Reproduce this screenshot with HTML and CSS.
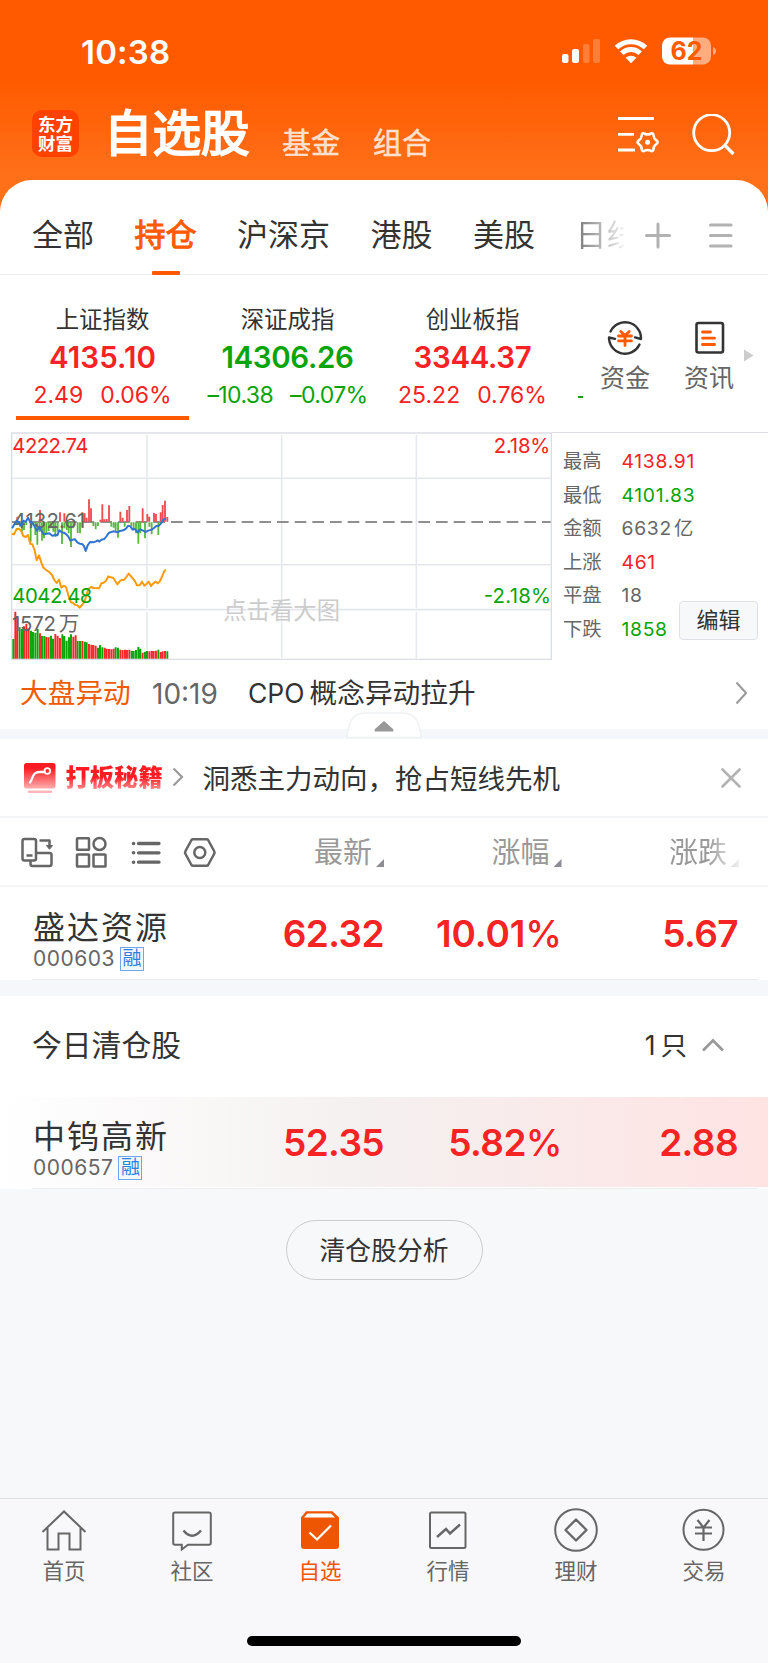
FILE: index.html
```html
<!DOCTYPE html>
<html lang="zh-CN">
<head>
<meta charset="utf-8">
<title>自选股</title>
<link rel="stylesheet" href="styles.css">
</head>
<body>
<div class="app">
  <div class="statusbar">
    <span class="clock">10:38</span>
    <svg class="signals" width="156" height="30" viewBox="0 0 156 30" fill="#fff">
      <rect x="2" y="17" width="6.5" height="9" rx="2"/>
      <rect x="12" y="12" width="7" height="14" rx="2"/>
      <rect x="23" y="7" width="6.5" height="19" rx="2" opacity=".22"/>
      <rect x="33" y="2" width="7" height="24" rx="2" opacity=".22"/>
      <g fill="none" stroke="#fff" stroke-width="5">
        <path d="M56.5 10.5a21 21 0 0 1 29 0"/>
        <path d="M61.8 16.2a13.2 13.2 0 0 1 18.4 0"/>
      </g>
      <path d="M65.6 20.8a8 8 0 0 1 10.8 0L71 26.2z"/>
      <path d="M110 0.5h23v27h-23a8 8 0 0 1-8-8v-11a8 8 0 0 1 8-8z"/>
      <path d="M133 .5h10a8 8 0 0 1 8 8v11a8 8 0 0 1-8 8h-10zM153 10q3 1 3 4t-3 4z" opacity=".5"/>
      <text x="126.500" y="22.500" font-size="25" font-weight="700" text-anchor="middle" fill="#ff5a00">62</text>
    </svg>
  </div>
  <header class="header">
    <div class="logo"><span>东方</span><span>财富</span></div>
    <h1 class="title">自选股</h1>
    <span class="sub">基金</span>
    <span class="sub">组合</span>
    <svg class="head-icons" width="120" height="44" viewBox="0 0 120 44" fill="none" stroke="#fff" stroke-width="2.800">
      <path d="M2 4.500h36M2 20.300h16M2 36h17"/>
      <path transform="translate(31.600 28.200) scale(.93)" d="M9.400-1.900Q12.200 0 9.400 1.900Q6.600 3.800 6.350 7.200Q6.100 10.600 3.050 9.100Q0 7.600-3.050 9.100Q-6.100 10.600-6.350 7.200Q-6.600 3.800-9.400 1.900Q-12.200 0-9.400-1.900Q-6.600-3.800-6.350-7.200Q-6.100-10.600-3.050-9.100Q0-7.600 3.050-9.100Q6.100-10.600 6.350-7.200Q6.600-3.800 9.400-1.900z" stroke-linejoin="round"/>
      <circle cx="31.600" cy="28.200" r="2.500" fill="#fff" stroke="none"/>
      <circle cx="95.700" cy="18.700" r="18"/>
      <path d="M108.500 31l9 9" stroke-width="3.400"/>
    </svg>
  </header>

  <main class="sheet">
    <nav class="tabs">
      <span>全部</span><span class="on">持仓</span><span>沪深京</span><span>港股</span><span>美股</span><span class="fade">日线</span>
      <svg class="tab-icons" width="90" height="28" viewBox="0 0 90 28" stroke="#b2b2b2" stroke-width="3" stroke-linecap="round">
        <path d="M2.500 14.500h23M14 3v23M66.500 4h20.500M66.500 14.500h20.500M66.500 25h20.500"/>
      </svg>
    </nav>

    <section class="indices">
      <div class="index up on"><b>上证指数</b><strong>4135.10</strong><p><span>2.49</span><span>0.06%</span></p></div>
      <div class="index down"><b>深证成指</b><strong>14306.26</strong><p><span>–10.38</span><span>–0.07%</span></p></div>
      <div class="index up"><b>创业板指</b><strong>3344.37</strong><p><span>25.22</span><span>0.76%</span></p></div>
      <div class="next"><i></i></div>
      <div class="short">
        <svg width="38" height="38" viewBox="0 0 38 38" fill="none" stroke="#333" stroke-width="2.400" stroke-linecap="round" stroke-linejoin="round">
          <path d="M4.500 12.500a16 16 0 0 1 30.500 7.500l-6-1.600M33.500 25.500A16 16 0 0 1 3 18.500l6 1.300"/>
          <path d="M14.800 12.500l4.200 4 4.200-4M12.500 17h13M12.500 21.800h13M19 17v9.500" stroke="#ff5a00" stroke-width="2.800"/>
        </svg>
        <span>资金</span>
      </div>
      <div class="short">
        <svg width="38" height="38" viewBox="0 0 38 38" fill="none" stroke="#333" stroke-width="2.600" stroke-linecap="round">
          <rect x="6.500" y="4" width="26.500" height="29.500" rx="2"/>
          <path d="M12.500 13h8M12.500 19.200h12M12.500 25.500h12" stroke="#ff5a00" stroke-width="2.800"/>
        </svg>
        <span>资讯</span>
      </div>
      <svg class="more" width="10" height="14" viewBox="0 0 10 14"><path d="M0 .5v12L9.500 6.500z" fill="#ccc"/></svg>
    </section>

    <section class="market">
      <svg class="chart" width="552" height="245" viewBox="0 0 1656 735" fill="none">
        <g stroke="#e4e7ee" stroke-width="4.500">
          <path d="M36 160H1652M36 419H1652M441 30V548M441 560V700M845 30V548M845 560V700M1249 30V548M1249 560V700"/>
          <path d="M36 554H1652" stroke-width="5"/>
        </g>
        <path d="M1656 24H35V703H1654V24" stroke="#dcdee5" stroke-width="4"/>
        <path d="M36 291H1652" stroke="#8f8f8f" stroke-width="5.500" stroke-dasharray="35 18"/>
        <text x="670" y="583" font-size="70" fill="#ccc" textLength="350">点击看大图</text>
        <g stroke-width="5.500">
          <path stroke="#ef4a50" d="M52 290V275M120 290V255M180 290V262M193 290V265M247 290V262M254 290V265M260 290V278M267 290V223M273 290V250M301 290V284M307 290V238M313 290V283M320 290V282M327 290V241M361 290V260M368 290V278M381 290V255M388 290V243M428 290V250M442 290V267M448 290V275M462 290V264M468 290V267M482 290V262M488 290V240M495 290V227M502 290V276"/>
          <path stroke="#5ab83c" d="M52 292V300M60 292V305M66 292V320M72 292V315M79 292V300M92 292V350M99 292V300M106 292V330M112 292V359M119 292V320M126 292V347M132 292V340M139 292V325M146 292V318M153 292V310M160 292V320M166 292V335M173 292V320M186 292V357M193 292V310M200 292V315M206 292V325M213 292V366M220 292V310M233 292V324M240 292V325M247 292V305M280 292V303M287 292V313M294 292V303M334 292V305M341 292V308M347 292V320M354 292V338M374 292V305M394 292V303M401 292V315M408 292V325M415 292V356M421 292V325M435 292V340M448 292V305M455 292V328M475 292V330"/>
        </g>
        <g stroke-width="5.800">
          <path stroke="#f42828" d="M46 560V701M52 576V701M72 604V701M79 596V701M86 610V701M120 625V701M139 636V701M146 637V701M166 627V701M173 632V701M180 639V701M220 635V701M227 631V701M247 648V701M267 657V701M274 659V701M280 660V701M287 662V701M314 668V701M320 671V701M327 672V701M334 673V701M341 671V701M361 674V701M368 675V701M375 674V701M381 675V701M388 674V701M428 683V701M448 679V701M455 678V701M461 678V701M468 677V701M482 681V701M488 679V701M495 678V701"/>
          <path stroke="#08a408" d="M40 642V701M59 607V701M66 612V701M93 617V701M99 621V701M106 623V701M113 612V701M126 633V701M133 633V701M153 632V701M159 641V701M187 628V701M193 633V701M200 647V701M207 637V701M213 628V701M233 648V701M240 648V701M254 650V701M260 652V701M294 668V701M300 660V701M307 667V701M347 667V701M354 668V701M395 677V701M401 678V701M408 675V701M415 666V701M421 671V701M435 680V701M441 678V701M475 674V701M502 679V701"/>
        </g>
        <g font-size="61" fill="#666">
          <text x="38" y="309" textLength="218">4132.61</text>
          <text x="36" y="619" textLength="132">1572</text>
          <text x="176" y="619" font-size="62">万</text>
        </g>
        <path stroke="#ff9a0a" stroke-width="6" stroke-linejoin="round" d="M36 327L42 328 50 312 57 311 64 319 70 333 77 336 84 330 91 357 97 358 104 376 110 406 117 391 124 413 131 429 140 436 148 441 156 450 163 465 170 474 177 464 184 488 191 482 198 486 205 510 212 531 219 534 226 540 232 541 239 548 246 540 253 531 259 512 265 492 273 486 281 489 297 490 304 475 311 473 318 467 325 454 333 457 340 459 347 470 352 478 360 468 366 464 372 465 379 456 386 446 393 454 399 461 405 469 411 481 419 481 426 470 433 482 440 476 446 470 453 483 460 475 467 470 473 475 480 468 487 453 493 438 498 434"/>
        <path stroke="#3074cf" stroke-width="6" stroke-linejoin="round" d="M36 310L42 300 49 289 56 291 63 302 70 287 77 291 84 278 91 292 98 294 105 307 111 317 118 306 125 318 132 328 140 326 148 325 157 332 166 330 172 331 178 316 185 322 192 323 199 328 205 335 211 347 218 344 225 343 232 352 239 356 246 357 252 363 257 378 263 361 270 351 280 352 288 349 293 346 298 350 304 344 313 342 320 333 327 323 334 321 342 319 352 322 360 318 370 316 378 311 385 302 391 304 398 314 405 312 413 322 420 313 428 316 436 321 445 317 455 314 462 309 469 303 477 302 485 293 490 284 498 281"/>
        <g font-size="61">
          <text x="37" y="85" fill="#f52323" textLength="228">4222.74</text>
          <text x="37" y="534" fill="#08a408" textLength="240">4042.48</text>
          <text x="1481" y="85" fill="#f52323" textLength="170">2.18%</text>
          <text x="1451" y="534" fill="#08a408" textLength="202">-2.18%</text>
        </g>
      </svg>
      <div class="stats">
        <div><span>最高</span><em class="up">4138.91</em></div>
        <div><span>最低</span><em class="down">4101.83</em></div>
        <div><span>金额</span><em>6632<i>亿</i></em></div>
        <div><span>上涨</span><em class="up">461</em></div>
        <div><span>平盘</span><em>18</em></div>
        <div><span>下跌</span><em class="down">1858</em></div>
        <button class="edit">编辑</button>
      </div>
    </section>

    <section class="news">
      <span class="news-tag">大盘异动</span><span class="news-time">10:19</span><span class="news-text">CPO<i>概念异动拉升</i></span>
      <svg width="12" height="24" viewBox="0 0 12 24" fill="none" stroke="#999" stroke-width="2"><path d="M1.500 1.500L11 12 1.500 22.500"/></svg>
    </section>
    <div class="band">
      <svg class="fold" width="76" height="27" viewBox="0 0 76 27"><path d="M1 25.500Q3 1 18 1H58Q73 1 75 25.500z" fill="#fff" stroke="#f0f1f3" stroke-width="1.500"/><path d="M38 9.500l9 8v1.500H29V17.500z" fill="#999" stroke="#999" stroke-linejoin="round"/></svg>
    </div>

    <section class="promo">
      <svg class="promo-icon" width="32" height="31" viewBox="0 0 32 31" fill="none">
        <defs><linearGradient id="pg" x2="0" y2="1"><stop offset=".2" stop-color="#fb1b22"/><stop offset="1" stop-color="#ffadad"/></linearGradient></defs>
        <rect x="0" y="0" width="31.500" height="25.500" rx="2.500" fill="url(#pg)"/>
        <path d="M6 19.500C9.500 15 8 9 16 9h4.500" stroke="#fff" stroke-width="2.300" stroke-linecap="round"/>
        <circle cx="23.300" cy="8" r="2.800" stroke="#fff" stroke-width="1.800"/>
        <path d="M5 28.800h22" stroke="#ffb8b8" stroke-width="2.400" stroke-linecap="round"/>
      </svg>
      <span class="promo-name">打板秘籍</span>
      <svg class="promo-arrow" width="12" height="20" viewBox="0 0 12 20" fill="none" stroke="#999" stroke-width="2.200"><path d="M1.500 1.500L10 10 1.500 18.500"/></svg>
      <span class="promo-text">洞悉主力动向，抢占短线先机</span>
      <svg class="promo-close" width="20" height="20" viewBox="0 0 20 20" stroke="#b2b2b2" stroke-width="2.600" stroke-linecap="round"><path d="M1.500 1.500l17 17M18.500 1.500l-17 17"/></svg>
    </section>

    <section class="toolbar">
      <svg width="196" height="34" viewBox="0 0 196 34" fill="none" stroke="#666" stroke-width="2.500" stroke-linejoin="round">
        <rect x="1.500" y="4" width="13.500" height="21.500" rx="2"/><path d="M5.500 20.500h6M15.500 18H28.500a2 2 0 0 1 2 2V29a2 2 0 0 1-2 2H11.500a2 2 0 0 1-2-2V26M18.500 5.500H28.500v6"/><path d="M25.500 10.500h6l-3 3.800z" fill="#666" stroke-width="1"/>
        <rect x="56" y="3.300" width="12" height="11.500" rx=".6"/><circle cx="78.500" cy="9" r="6"/><rect x="56" y="19.500" width="12" height="12" rx=".6"/><rect x="72.500" y="19.500" width="12" height="12" rx=".6"/>
        <path d="M117.500 8.500h20.500M117.500 17.800h20.500M117.500 27.200h20.500" stroke-width="3.300" stroke-linecap="round"/>
        <path d="M112.500 8.500h.1M112.500 17.800h.1M112.500 27.200h.1" stroke-width="3.600" stroke-linecap="round"/>
        <path d="M172 4.200h13.600q1 0 1.500.8l6 11q.8 1.500 0 3l-6 11q-.5.800-1.500.8h-13.600q-1 0-1.500-.8l-6-11q-.8-1.500 0-3l6-11q.5-.8 1.500-.8z"/><circle cx="178.800" cy="17.500" r="5.500"/>
      </svg>
      <span class="col">最新<i></i></span><span class="col">涨幅<i></i></span><span class="col last">涨跌<i></i></span>
    </section>

    <section class="row first">
      <div class="stock"><b>盛达资源</b><p>000603<i>融</i></p></div>
      <strong>62.32</strong><strong class="ones">10.01<u>%</u></strong><strong>5.67</strong>
    </section>
    <div class="band gap"></div>
    <section class="group">
      <span class="group-name">今日清仓股</span><span class="group-count">1<i>只</i></span>
      <svg width="22" height="14" viewBox="0 0 22 14" fill="none" stroke="#999" stroke-width="2.800"><path d="M1 12.500L11 2.500 21 12.500"/></svg>
    </section>
    <section class="row tint">
      <div class="stock"><b>中钨高新</b><p>000657<i>融</i></p></div>
      <strong>52.35</strong><strong>5.82<u>%</u></strong><strong>2.88</strong>
    </section>
    <div class="foot"><button class="analyse">清仓股分析</button></div>
  </main>

  <nav class="bottom">
    <div class="items">
      <div><svg width="46" height="46" viewBox="0 0 46 46"><path d="M1.500 24L23 3.500 44.500 24M6.500 20V41.500H17.500V25.500H28.500V41.500H39.500V20"/></svg><span>首页</span></div>
      <div><svg width="46" height="46" viewBox="0 0 46 46"><path d="M6 4.500H40a1.800 1.800 0 0 1 1.800 1.800V35a1.800 1.800 0 0 1-1.800 1.800H19L12.800 41.500V36.800H6A1.800 1.800 0 0 1 4.200 35V6.300A1.800 1.800 0 0 1 6 4.500z"/><path d="M14.500 22.500q8.500 10.500 17.500 0" stroke-width="2.500"/></svg><span>社区</span></div>
      <div class="on"><svg width="46" height="46" viewBox="0 0 46 46"><path d="M9 3.200H35.500L42 9.500V38a3 3 0 0 1-3 3H7a3 3 0 0 1-3-3V9.500z" fill="#ef5602" stroke="none"/><path d="M10.500 5.500H34L38 9.500H7z" fill="#fff" stroke="none"/><path d="M12.500 24.500l7.500 7L34 17.500" stroke="#fff" stroke-width="2.300"/></svg><span>自选</span></div>
      <div><svg width="46" height="46" viewBox="0 0 46 46"><rect x="5" y="4.500" width="35.500" height="35.500" rx="1.500"/><path d="M12 29l9-8 4 4.500L35 16.500" stroke-width="2.400"/></svg><span>行情</span></div>
      <div><svg width="46" height="46" viewBox="0 0 46 46"><circle cx="23" cy="22" r="20.800"/><path d="M23 11.500L33.500 22 23 32.500 12.500 22z" stroke-width="2.300" stroke-linejoin="round"/></svg><span>理财</span></div>
      <div><svg width="46" height="46" viewBox="0 0 46 46"><circle cx="22.500" cy="21.800" r="20"/><path d="M16.500 12l6 7.500 6-7.500M14 19.500h17M14 25.500h17M22.500 19.500V33" stroke-width="2.200"/></svg><span>交易</span></div>
    </div>
    <div class="home"></div>
  </nav>
</div>
</body>
</html>
```
FILE: styles.css
```css
* { box-sizing: border-box; margin: 0; padding: 0; }
i, em, u { font-style: normal; text-decoration: none; }
body, button { font-family: Inter, "Noto Sans CJK SC", sans-serif; color: #333; }
svg { display: block; flex: none; }
.app { width: 768px; height: 1663px; display: flex; flex-direction: column; white-space: nowrap; overflow: hidden; background: linear-gradient(#ff5a00 0, #ff5a00 80px, #ff7019 175px, #ff7019 240px) no-repeat; }
.up { color: #f52323; }
.down { color: #08a408; }

.statusbar { height: 104px; display: flex; align-items: center; justify-content: space-between; padding: 0 52px 1px 81px; color: #fff; }
.clock { font-size: 33px; font-weight: 600; letter-spacing: .2px; }

.header { height: 76px; padding: 0 32px 17px; display: flex; align-items: center; color: #fff; }
.logo { width: 47px; height: 47px; border-radius: 10px; background: #ff4200; display: flex; flex-direction: column; align-items: center; justify-content: center; font-size: 17.5px; line-height: 19px; font-weight: 700; }
.title { margin: 1px 0 0 25px; width: 148px; font-size: 48.5px; line-height: 58px; font-weight: 400; -webkit-text-stroke: 1.9px #fff; }
.sub { margin: 20px 0 0 29px; width: 62px; font-size: 29px; line-height: 40px; font-weight: 400; color: #ffe0cf; -webkit-text-stroke: .5px #ffe0cf; }
.title + .sub { margin-left: 30px; }
.head-icons { margin: 4px 0 0 auto; }

.sheet { flex: 1; background: #fff; border-radius: 32px 32px 0 0; display: flex; flex-direction: column; }
.tabs { height: 95px; padding: 15px 34px 0 32px; display: flex; align-items: center; gap: 40.5px; border-bottom: 1px solid #eceded; font-size: 31px; line-height: 40px; }
.tabs span { flex: none; }
.tabs .on { position: relative; color: #ff5a00; -webkit-text-stroke: 1px #ff5a00; }
.tabs .on::after { content: ""; position: absolute; left: 17px; bottom: -20px; width: 28px; height: 4px; border-radius: 1px; background: #ff5a00; }
.tabs .fade { width: 62px; margin-right: -38px; color: transparent; background: linear-gradient(90deg, #777 0, #ddd 40px, #eee 47px, #0000 48px) text; }
.tab-icons { margin-left: auto; }

.indices { height: 150px; padding-left: 10px; display: flex; }
.index { width: 185px; padding-top: 29px; display: flex; flex-direction: column; align-items: center; }
.index b { font-size: 23.4px; line-height: 32px; font-weight: 400; color: #333; }
.index strong { margin-top: 1px; font-size: 29.5px; line-height: 40px; font-weight: 600; letter-spacing: -.35px; }
.index.on strong { letter-spacing: .1px; }
.index p { margin-top: 3px; display: flex; gap: 17px; font-size: 23px; line-height: 30px; }
.index.down p { letter-spacing: -.6px; }
.index.on::after { content: ""; margin-top: 6px; width: 173px; height: 4px; background: #ff5a00; }
.next { width: 26px; padding: 121px 0 0 13px; }
.next i { display: block; width: 5px; height: 2px; background: #08a408; }
.short { width: 68px; padding-top: 44px; display: flex; flex-direction: column; align-items: center; }
.short + .short { margin-left: 16px; }
.short span { margin-top: 3px; font-size: 25px; line-height: 36px; color: #666; }
.more { margin: 74px 0 0 1px; }

.market { height: 245px; display: flex; }
.stats { position: relative; flex: 1; margin-top: 7px; padding: 12px 0 0 11px; border-top: 1px solid #dcdee5; font-size: 19.3px; line-height: 33.5px; color: #666; }
.stats div { display: flex; }
.stats span { width: 58.500px; }
.stats em { letter-spacing: .7px; }
.stats i { margin-left: 2px; }
.edit { position: absolute; left: 127px; top: 168px; width: 79px; height: 39px; border: 1px solid #dfe1e7; border-radius: 4px; background: #f7f8fa; font-size: 22px; line-height: 35px; }

.news { height: 59px; padding: 0 21px 13px 20px; display: flex; align-items: center; font-size: 27.7px; line-height: 34px; }
.news-tag { width: 132px; margin-top: -1px; color: #f05a00; }
.news-time { width: 96px; margin-top: 2px; font-size: 28px; color: #666; }
.news-text { flex: 1; margin-top: -1px; font-size: 26.5px; }
.news-text i { margin-left: 5px; font-size: 27.7px; }
.band { position: relative; height: 10px; background: #f6f7fa; }
.gap { height: 16px; }
.fold { position: absolute; left: 346px; top: -17px; }

.promo { height: 79px; padding: 0 27px 2px 23.500px; display: flex; align-items: center; border-bottom: 2px solid #f3f4f6; }
.promo-icon { margin-top: 3px; }
.promo-name { margin-left: 10px; width: 98px; font-size: 24.3px; line-height: 36px; font-weight: 900; color: transparent; background: linear-gradient(#fb1b22 50%, #ff9e9e 90%) text; }
.promo-arrow { margin: 1px 0 0 8px; }
.promo-text { margin-left: 19px; font-size: 27.5px; flex: 1; }
.promo-close { margin-top: 2px; }

.toolbar { height: 69px; padding-left: 20.500px; display: flex; align-items: center; border-bottom: 2px solid #f3f4f6; }
.col { width: 177.500px; padding-top: 2px; display: flex; justify-content: flex-end; align-items: center; font-size: 29px; line-height: 40px; color: #999; }
svg + .col { width: 167.5px; }
.col i { margin: 21px 0 0 4px; width: 8px; height: 8px; background: #8d8d96; clip-path: polygon(100% 0, 100% 100%, 0 100%); }
.last { mask: linear-gradient(90deg, #000 82%, #0002 100%); }

.row { position: relative; height: 92px; flex: none; padding-left: 33px; display: grid; grid-template-columns: 200px 151px 178px 176px; }
.row.first { margin-top: 1px; }
.row::after { content: ""; position: absolute; left: 32px; right: 10px; bottom: 0; height: 1px; background: #eceded; }
.tint { background: linear-gradient(90deg, #fff, #f5f0f0 48%, #ffe3e3) no-repeat 0 0 / 100% 90px; }
.stock { padding-top: 20px; }
.stock b { display: block; font-size: 32px; line-height: 40px; font-weight: 400; letter-spacing: 2px; }
.stock p { display: flex; align-items: center; margin-top: -1px; font-size: 21px; line-height: 24px; letter-spacing: .5px; color: #666; }
.stock i { margin-left: 5px; width: 24px; height: 24px; border: 1.500px solid #6ea8ea; font-size: 19px; line-height: 21px; text-align: center; letter-spacing: 0; color: #2f7fdc; background: #f1f7fe; }
.row strong { text-align: right; font-size: 37px; line-height: 92px; font-weight: 600; color: #f52323; letter-spacing: -.6px; }
.row .ones { letter-spacing: -.1px; }
.row u { font-weight: 500; }
.group { height: 101px; flex: none; padding: 0 44px 3px 32px; display: flex; align-items: center; line-height: 36px; }
.group-name { flex: 1; margin-top: -1px; font-size: 29.8px; }
.group-count { margin: -1px 15px 0 0; font-size: 26.5px; }
.group-count i { margin-left: 5px; }
.foot { flex: 1; padding-top: 31px; background: #f7f8fa; text-align: center; }
.analyse { width: 197px; height: 60px; padding-bottom: 3px; border: 1px solid #ccc; border-radius: 30px; background: none; font-size: 25.800px; }

.bottom { height: 165px; background: #f8f8fb; border-top: 1px solid #e0e0e3; display: flex; flex-direction: column; align-items: center; }
.items { width: 768px; height: 137px; padding-top: 9px; display: grid; grid-template-columns: repeat(6, 1fr); }
.items div { display: flex; flex-direction: column; align-items: center; font-size: 21.500px; line-height: 32px; color: #666; }
.items svg { fill: none; stroke: #666; stroke-width: 2; }
.items span { margin-top: 1px; }
.items .on { color: #f05602; }
.home { width: 274px; height: 10px; border-radius: 5px; background: #000; }
```
